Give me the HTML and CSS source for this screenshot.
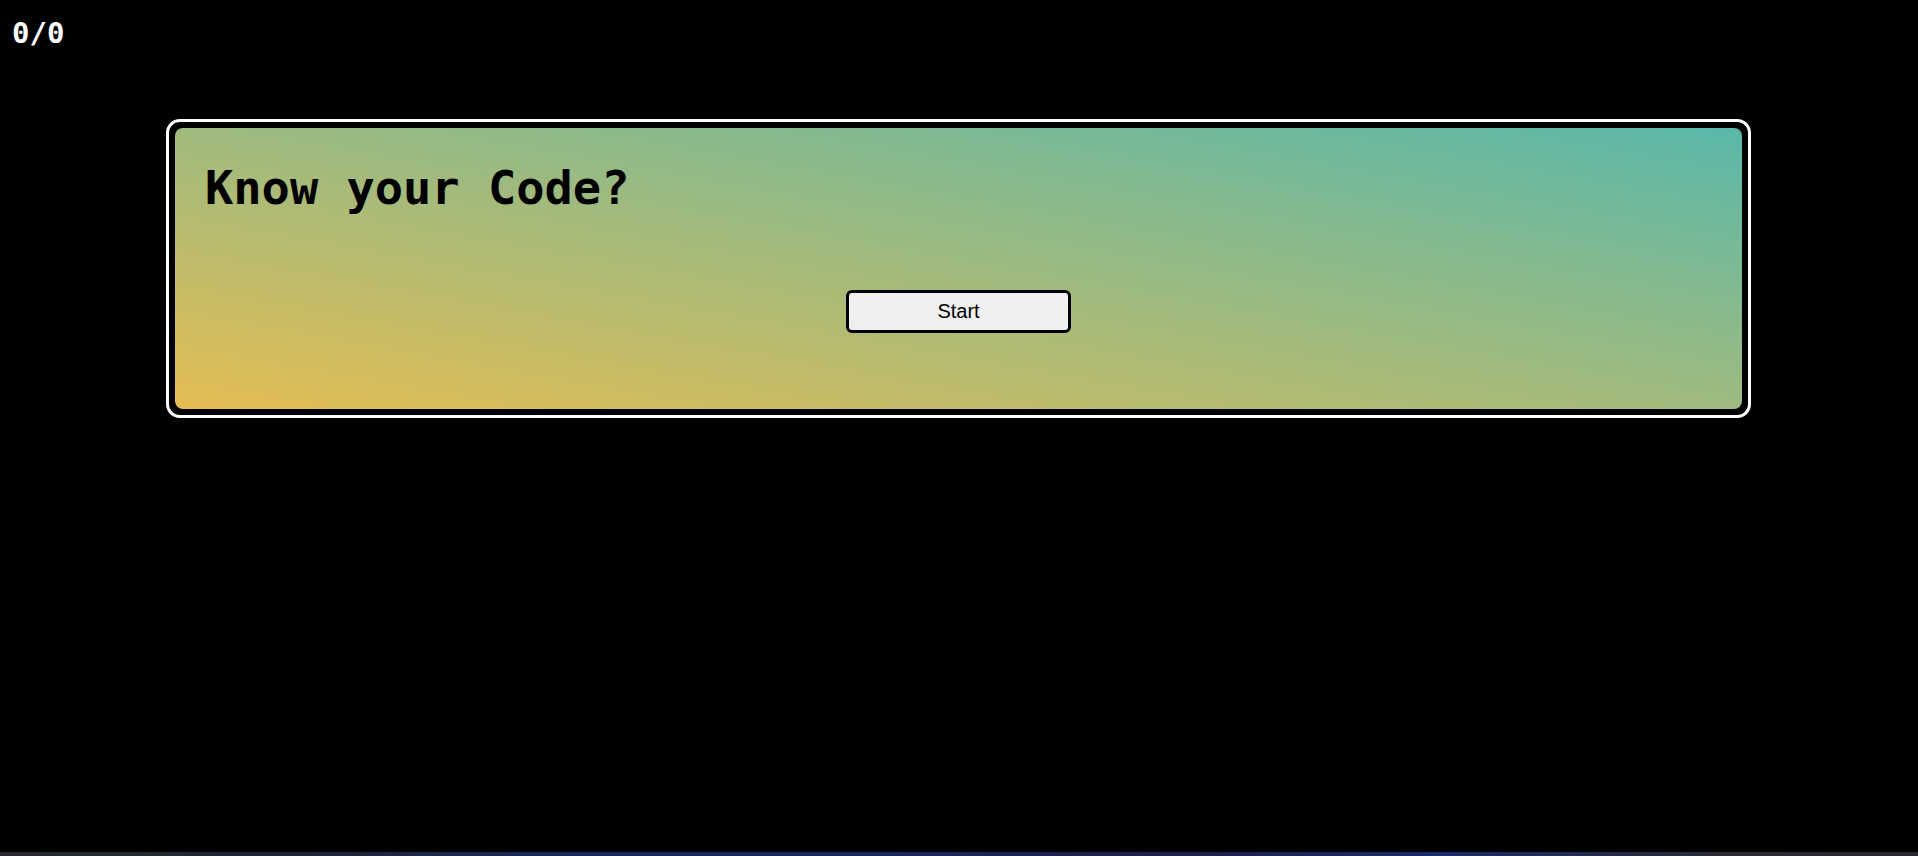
FILE: index.html
```html
<!DOCTYPE html>
<html>
<head>
<meta charset="utf-8">
<link rel="stylesheet" href="styles.css">
</head>
<body>
<div class="page">
  <div class="score">0/0</div>
  <div class="card">
    <div class="card-inner">
      <h1 class="title">Know your Code?</h1>
      <div class="actions">
        <button class="start">Start</button>
      </div>
    </div>
  </div>
</div>
<div class="bottom-strip"></div>
</body>
</html>
```

FILE: styles.css
```css
html, body {
  margin: 0;
  padding: 0;
  background: #000;
  height: 100%;
  overflow: hidden;
}
body {
  display: flex;
  flex-direction: column;
}
.page {
  flex: 1;
  padding: 16px 0 0 12px;
}
.score {
  font-family: "DejaVu Sans Mono", monospace;
  font-weight: bold;
  font-size: 29px;
  line-height: 34px;
  color: #fff;
}
.card {
  box-sizing: border-box;
  width: 1585px;
  margin: 69px 0 0 154px;
  border: 3px solid #fff;
  border-radius: 14px;
  padding: 6px;
  background: #000;
}
.card-inner {
  box-sizing: border-box;
  height: 281px;
  border-radius: 8px;
  background: linear-gradient(to top right, #e5bd53, #5ab8aa);
  padding: 33px 30px 0 30px;
}
.title {
  margin: 0;
  font-family: "DejaVu Sans Mono", monospace;
  font-weight: bold;
  font-size: 47px;
  line-height: 54px;
  color: #000;
}
.actions {
  display: flex;
  justify-content: center;
  margin-top: 75px;
}
.start {
  box-sizing: border-box;
  width: 225px;
  height: 43px;
  border: 3px solid #000;
  border-radius: 6px;
  background: #efefef;
  font-family: "Liberation Sans", Arial, sans-serif;
  font-size: 20px;
  color: #000;
  padding: 0;
}
.bottom-strip {
  height: 4px;
  background: linear-gradient(to right, #25282d 0%, #1f2535 15%, #17275a 30%, #182660 45%, #1c1f45 60%, #1b2a6a 75%, #2a2c34 90%, #25272c 100%);
}
```
